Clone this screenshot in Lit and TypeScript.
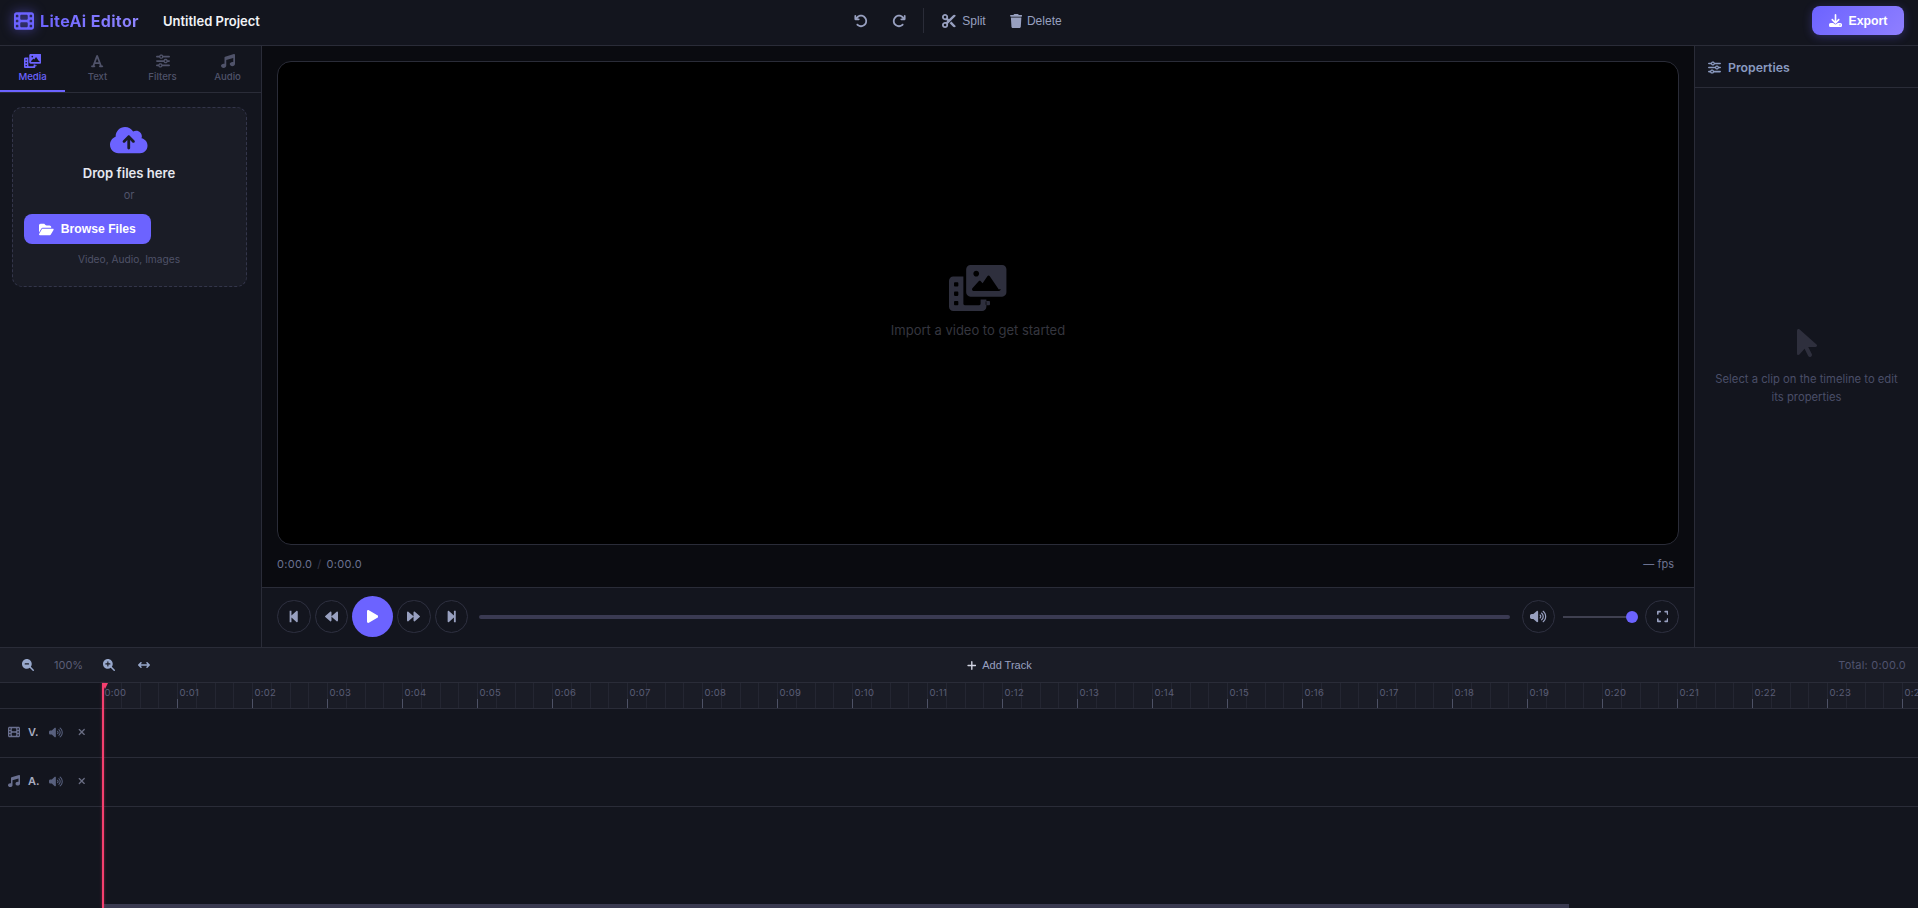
import { LitElement, html, css, svg } from 'lit';
import { customElement } from 'lit/decorators.js';

// font-awesome style glyphs: [viewBox width, path]
const ICONS: Record<string, [number, string]> = {
  film: [512, 'M0 96C0 60.7 28.7 32 64 32H448c35.3 0 64 28.7 64 64V416c0 35.3-28.7 64-64 64H64c-35.3 0-64-28.7-64-64V96zM48 368v32c0 8.8 7.2 16 16 16H96c8.8 0 16-7.2 16-16V368c0-8.8-7.2-16-16-16H64c-8.8 0-16 7.2-16 16zm368-16c-8.8 0-16 7.2-16 16v32c0 8.8 7.2 16 16 16h32c8.8 0 16-7.2 16-16V368c0-8.8-7.2-16-16-16H416zM48 240v32c0 8.8 7.2 16 16 16H96c8.8 0 16-7.2 16-16V240c0-8.8-7.2-16-16-16H64c-8.8 0-16 7.2-16 16zm368-16c-8.8 0-16 7.2-16 16v32c0 8.8 7.2 16 16 16h32c8.8 0 16-7.2 16-16V240c0-8.8-7.2-16-16-16H416zM48 112v32c0 8.8 7.2 16 16 16H96c8.8 0 16-7.2 16-16V112c0-8.8-7.2-16-16-16H64c-8.8 0-16 7.2-16 16zM416 96c-8.8 0-16 7.2-16 16v32c0 8.8 7.2 16 16 16h32c8.8 0 16-7.2 16-16V112c0-8.8-7.2-16-16-16H416zM160 128v64c0 17.7 14.3 32 32 32H320c17.7 0 32-14.3 32-32V128c0-17.7-14.3-32-32-32H192c-17.7 0-32 14.3-32 32zm32 160c-17.7 0-32 14.3-32 32v64c0 17.7 14.3 32 32 32H320c17.7 0 32-14.3 32-32V320c0-17.7-14.3-32-32-32H192z'],
  media: [640, 'M352 432c0 8.836-7.164 16-16 16H176c-8.838 0-16-7.164-16-16L160 128H48C21.49 128 .0003 149.5 .0003 176v288c0 26.51 21.49 48 48 48h320c26.51 0 48-21.49 48-48v-80h-64V432zM104 439c0 4.969-4.031 9-9 9h-30c-4.969 0-9-4.031-9-9v-30c0-4.969 4.031-9 9-9h30c4.969 0 9 4.031 9 9V439zM104 335c0 4.969-4.031 9-9 9h-30c-4.969 0-9-4.031-9-9v-30c0-4.969 4.031-9 9-9h30c4.969 0 9 4.031 9 9V335zM104 231c0 4.969-4.031 9-9 9h-30c-4.969 0-9-4.031-9-9v-30C56 196 60.03 192 65 192h30c4.969 0 9 4.031 9 9V231zM408 409c0-4.969 4.031-9 9-9h30c4.969 0 9 4.031 9 9v30c0 4.969-4.031 9-9 9h-30c-4.969 0-9-4.031-9-9V409zM591.1 0H239.1C213.5 0 191.1 21.49 191.1 48v256c0 26.51 21.49 48 48 48h352c26.51 0 48-21.49 48-48v-256C640 21.49 618.5 0 591.1 0zM303.1 64c17.68 0 32 14.33 32 32s-14.32 32-32 32C286.3 128 271.1 113.7 271.1 96S286.3 64 303.1 64zM574.1 279.6C571.3 286 564.1 288 558.1 288H273.1C266.1 288 260.5 284.3 257.7 278.1C255 271.9 256.1 264.8 260.5 259.6l70-80C333.5 176.1 337.7 175.1 342 175.1c4.311 0 8.463 1.133 11.5 4.525l20.52 23.36l53.07-77.91c3.072-4.51 8.117-7.168 13.5-7.168c5.383 0 10.43 2.658 13.5 7.168l100.1 147.1C576.8 264.8 577.5 272.1 574.1 279.6z'],
  font: [448, 'M254 52.8C249.3 40.3 237.3 32 224 32s-25.3 8.3-30 20.8L57.8 416H32c-17.7 0-32 14.3-32 32s14.3 32 32 32h96c17.7 0 32-14.3 32-32s-14.3-32-32-32h-1.8l18-48H303.8l18 48H320c-17.7 0-32 14.3-32 32s14.3 32 32 32h96c17.7 0 32-14.3 32-32s-14.3-32-32-32H390.2L254 52.8zM279.8 304H168.2L224 155.1 279.8 304z'],
  sliders: [512, 'M0 416c0 17.7 14.3 32 32 32l54.7 0c12.3 28.3 40.5 48 73.3 48s61-19.7 73.3-48L480 448c17.7 0 32-14.3 32-32s-14.3-32-32-32l-246.7 0c-12.3-28.3-40.5-48-73.3-48s-61 19.7-73.3 48L32 384c-17.7 0-32 14.3-32 32zm128 0a32 32 0 1 1 64 0 32 32 0 1 1 -64 0zM320 256a32 32 0 1 1 64 0 32 32 0 1 1 -64 0zm32-80c-32.8 0-61 19.7-73.3 48L32 224c-17.7 0-32 14.3-32 32s14.3 32 32 32l246.7 0c12.3 28.3 40.5 48 73.3 48s61-19.7 73.3-48l54.7 0c17.7 0 32-14.3 32-32s-14.3-32-32-32l-54.7 0c-12.3-28.3-40.5-48-73.3-48zM192 128a32 32 0 1 1 0-64 32 32 0 1 1 0 64zm73.3-64C253 35.7 224.8 16 192 16s-61 19.7-73.3 48L32 64C14.3 64 0 78.3 0 96s14.3 32 32 32l86.7 0c12.3 28.3 40.5 48 73.3 48s61-19.7 73.3-48L480 128c17.7 0 32-14.3 32-32s-14.3-32-32-32L265.3 64z'],
  music: [512, 'M499.1 6.3c8.1 6 12.9 15.6 12.9 25.7v72V368c0 44.2-43 80-96 80s-96-35.8-96-80s43-80 96-80c11.2 0 22 1.6 32 4.6V147L192 223.8V432c0 44.2-43 80-96 80s-96-35.8-96-80s43-80 96-80c11.2 0 22 1.6 32 4.6V200 128c0-14.1 9.3-26.6 22.8-30.7l320-96c9.7-2.9 20.2-1.1 28.3 4.9z'],
  cloud: [640, 'M144 480C64.5 480 0 415.5 0 336c0-62.8 40.2-116.2 96.2-135.9c-.1-2.7-.2-5.4-.2-8.1c0-88.4 71.6-160 160-160c59.3 0 111 32.2 138.7 80.2C409.9 102 428.3 96 448 96c53 0 96 43 96 96c0 12.2-2.3 23.8-6.4 34.6C596 238.4 640 290.1 640 352c0 70.7-57.3 128-128 128H144zm79-217c-9.4 9.4-9.4 24.6 0 33.9s24.6 9.4 33.9 0l39-39V392c0 13.3 10.7 24 24 24s24-10.7 24-24V257.9l39 39c9.4 9.4 24.6 9.4 33.9 0s9.4-24.6 0-33.9l-80-80c-9.4-9.4-24.6-9.4-33.9 0l-80 80z'],
  folder: [576, 'M88.7 223.8L0 375.8V96C0 60.7 28.7 32 64 32H181.5c17 0 33.3 6.7 45.3 18.7l26.5 26.5c12 12 28.3 18.7 45.3 18.7H416c35.3 0 64 28.7 64 64v32H144c-22.8 0-43.8 12.1-55.3 31.8zm27.6 16.1C122.1 230 132.6 224 144 224H544c11.5 0 22 6.1 27.7 16.1s5.7 22.2-.1 32.1l-112 192C453.9 474 443.4 480 432 480H32c-11.5 0-22-6.1-27.7-16.1s-5.7-22.2 .1-32.1l112-192z'],
  undo: [512, 'M125.7 160H176c17.7 0 32 14.3 32 32s-14.3 32-32 32H48c-17.7 0-32-14.3-32-32V64c0-17.7 14.3-32 32-32s32 14.3 32 32v51.2L97.6 97.6c87.5-87.5 229.3-87.5 316.8 0s87.5 229.3 0 316.8s-229.3 87.5-316.8 0c-12.5-12.5-12.5-32.8 0-45.3s32.8-12.5 45.3 0c62.5 62.5 163.8 62.5 226.3 0s62.5-163.8 0-226.3s-163.8-62.5-226.3 0L125.7 160z'],
  scissors: [512, 'M256 192l-39.5-39.5c4.9-12.6 7.5-26.2 7.5-40.5C224 50.1 173.9 0 112 0S0 50.1 0 112s50.1 112 112 112c14.3 0 27.9-2.7 40.5-7.5L192 256l-39.5 39.5c-12.6-4.9-26.2-7.5-40.5-7.5C50.1 288 0 338.1 0 400s50.1 112 112 112s112-50.1 112-112c0-14.3-2.7-27.9-7.5-40.5L499.2 76.8c7.1-7.1 7.1-18.5 0-25.6c-28.3-28.3-74.1-28.3-102.4 0L256 192zm22.6 150.6L396.8 460.8c28.3 28.3 74.1 28.3 102.4 0c7.1-7.1 7.1-18.5 0-25.6L342.6 278.6l-64 64zM64 112a48 48 0 1 1 96 0 48 48 0 1 1 -96 0zm48 240a48 48 0 1 1 0 96 48 48 0 1 1 0-96z'],
  trash: [448, 'M135.2 17.7L128 32H32C14.3 32 0 46.3 0 64S14.3 96 32 96H416c17.7 0 32-14.3 32-32s-14.3-32-32-32H320l-7.2-14.3C307.4 6.8 296.3 0 284.2 0H163.8c-12.1 0-23.2 6.8-28.6 17.7zM416 128H32L53.2 467c1.6 25.3 22.6 45 47.9 45H346.9c25.3 0 46.3-19.7 47.9-45L416 128z'],
  download: [512, 'M288 32c0-17.7-14.3-32-32-32s-32 14.3-32 32V274.7l-73.4-73.4c-12.5-12.5-32.8-12.5-45.3 0s-12.5 32.8 0 45.3l128 128c12.5 12.5 32.8 12.5 45.3 0l128-128c12.5-12.5 12.5-32.8 0-45.3s-32.8-12.5-45.3 0L288 274.7V32zM64 352c-35.3 0-64 28.7-64 64v32c0 35.3 28.7 64 64 64H448c35.3 0 64-28.7 64-64V416c0-35.3-28.7-64-64-64H346.5l-45.3 45.3c-25 25-65.5 25-90.5 0L165.5 352H64zm368 56a24 24 0 1 1 0 48 24 24 0 1 1 0-48z'],
  pointer: [320, 'M0 55.2V426c0 12.2 9.9 22 22 22c6.3 0 12.4-2.7 16.6-7.5L121.2 346l58.1 116.3c7.9 15.8 27.1 22.2 42.9 14.3s22.2-27.1 14.3-42.9L179.8 320H297.9c12.2 0 22.1-9.9 22.1-22.1c0-6.3-2.7-12.3-7.4-16.5L38.6 37.9C34.3 34.1 28.9 32 23.2 32C10.4 32 0 42.4 0 55.2z'],
  start: [448, 'M64 468V44c0-6.6 5.4-12 12-12h48c6.6 0 12 5.4 12 12v176.4l195.5-181C352.1 22.3 384 36.6 384 64v384c0 27.4-31.9 41.7-52.5 24.6L136 292.7V468c0 6.6-5.4 12-12 12H76c-6.6 0-12-5.4-12-12z'],
  end: [448, 'M384 44v424c0 6.6-5.4 12-12 12h-48c-6.6 0-12-5.4-12-12V291.6l-195.5 181C95.9 489.7 64 475.4 64 448V64c0-27.4 31.9-41.7 52.5-24.6L312 219.3V44c0-6.6 5.4-12 12-12h48c6.6 0 12 5.4 12 12z'],
  backward: [512, 'M11.5 280.6l192 160c20.6 17.2 52.5 2.8 52.5-24.6V96c0-27.4-31.9-41.8-52.5-24.6l-192 160c-15.3 12.8-15.3 36.4 0 49.2zm256 0l192 160c20.6 17.2 52.5 2.8 52.5-24.6V96c0-27.4-31.9-41.8-52.5-24.6l-192 160c-15.3 12.8-15.3 36.4 0 49.2z'],
  forward: [512, 'M500.5 231.4l-192-160C287.9 54.3 256 68.6 256 96v320c0 27.4 31.9 41.8 52.5 24.6l192-160c15.3-12.8 15.3-36.4 0-49.2zm-256 0l-192-160C31.9 54.3 0 68.6 0 96v320c0 27.4 31.9 41.8 52.5 24.6l192-160c15.3-12.8 15.3-36.4 0-49.2z'],
  play: [448, 'M424.4 214.7L72.4 6.6C43.8-10.3 0 6.1 0 47.9V464c0 37.5 40.7 60.1 72.4 41.3l352-208c31.4-18.5 31.5-64.1 0-82.6z'],
  volume: [640, 'M533.6 32.5C598.5 85.2 640 165.8 640 256s-41.5 170.7-106.4 223.5c-10.3 8.4-25.4 6.8-33.8-3.5s-6.8-25.4 3.5-33.8C557.5 398.2 592 331.2 592 256s-34.5-142.2-88.7-186.3c-10.3-8.4-11.8-23.5-3.5-33.8s23.5-11.8 33.8-3.5zM473.1 107c43.2 35.2 70.9 88.9 70.9 149s-27.7 113.8-70.9 149c-10.3 8.4-25.4 6.8-33.8-3.5s-6.8-25.4 3.5-33.8C475.3 341.3 496 301.1 496 256s-20.7-85.3-53.2-111.8c-10.3-8.4-11.8-23.5-3.5-33.8s23.5-11.8 33.8-3.5zm-60.5 74.5C434.1 199.1 448 225.9 448 256s-13.9 56.9-35.4 74.5c-10.3 8.4-25.4 6.8-33.8-3.5s-6.8-25.4 3.5-33.8C393.1 284.4 400 271 400 256s-6.9-28.4-17.7-37.3c-10.3-8.4-11.8-23.5-3.5-33.8s23.5-11.8 33.8-3.5zM301.1 34.8C312.6 40 320 51.4 320 64V448c0 12.6-7.4 24-18.9 29.2s-25 3.1-34.4-5.3L131.8 352H64c-35.3 0-64-28.7-64-64V224c0-35.3 28.7-64 64-64h67.8L266.7 40.1c9.4-8.4 22.9-10.4 34.4-5.3z'],
  expand: [448, 'M32 32C14.3 32 0 46.3 0 64v96c0 17.7 14.3 32 32 32s32-14.3 32-32V96h64c17.7 0 32-14.3 32-32s-14.3-32-32-32H32zM64 352c0-17.7-14.3-32-32-32s-32 14.3-32 32v96c0 17.7 14.3 32 32 32h96c17.7 0 32-14.3 32-32s-14.3-32-32-32H64V352zM320 32c-17.7 0-32 14.3-32 32s14.3 32 32 32h64v64c0 17.7 14.3 32 32 32s32-14.3 32-32V64c0-17.7-14.3-32-32-32H320zM448 352c0-17.7-14.3-32-32-32s-32 14.3-32 32v64H320c-17.7 0-32 14.3-32 32s14.3 32 32 32h96c17.7 0 32-14.3 32-32V352z'],
  zoomout: [512, 'M416 208c0 45.9-14.9 88.3-40 122.7L502.6 457.4c12.5 12.5 12.5 32.8 0 45.3s-32.8 12.5-45.3 0L330.7 376c-34.4 25.2-76.8 40-122.7 40C93.1 416 0 322.9 0 208S93.1 0 208 0S416 93.1 416 208zM136 184c-13.3 0-24 10.7-24 24s10.7 24 24 24H280c13.3 0 24-10.7 24-24s-10.7-24-24-24H136z'],
  zoomin: [512, 'M416 208c0 45.9-14.9 88.3-40 122.7L502.6 457.4c12.5 12.5 12.5 32.8 0 45.3s-32.8 12.5-45.3 0L330.7 376c-34.4 25.2-76.8 40-122.7 40C93.1 416 0 322.9 0 208S93.1 0 208 0S416 93.1 416 208zM184 296c0 13.3 10.7 24 24 24s24-10.7 24-24V232h64c13.3 0 24-10.7 24-24s-10.7-24-24-24H232V120c0-13.3-10.7-24-24-24s-24 10.7-24 24v64H120c-13.3 0-24 10.7-24 24s10.7 24 24 24h64v64z'],
  fit: [512, 'M406.6 374.6l96-96c12.5-12.5 12.5-32.8 0-45.3l-96-96c-12.5-12.5-32.8-12.5-45.3 0s-12.5 32.8 0 45.3L402.7 224l-293.5 0 41.4-41.4c12.5-12.5 12.5-32.8 0-45.3s-32.8-12.5-45.3 0l-96 96c-12.5 12.5-12.5 32.8 0 45.3l96 96c12.5 12.5 32.8 12.5 45.3 0s12.5-32.8 0-45.3L109.3 288l293.5 0-41.4 41.4c-12.5 12.5-12.5 32.8 0 45.3s32.8 12.5 45.3 0z'],
  plus: [448, 'M256 80c0-17.7-14.3-32-32-32s-32 14.3-32 32V224H48c-17.7 0-32 14.3-32 32s14.3 32 32 32H192V432c0 17.7 14.3 32 32 32s32-14.3 32-32V288H400c17.7 0 32-14.3 32-32s-14.3-32-32-32H256V80z'],
  xmark: [384, 'M342.6 150.6c12.5-12.5 12.5-32.8 0-45.3s-32.8-12.5-45.3 0L192 210.7 86.6 105.4c-12.5-12.5-32.8-12.5-45.3 0s-12.5 32.8 0 45.3L146.7 256 41.4 361.4c-12.5 12.5-12.5 32.8 0 45.3s32.8 12.5 45.3 0L192 301.3 297.4 406.6c12.5 12.5 32.8 12.5 45.3 0s12.5-32.8 0-45.3L237.3 256 342.6 150.6z'],
};

const icon = (name: string, cls = '') => {
  const [w, d] = ICONS[name];
  return html`<svg class="ic ${cls}" viewBox="0 0 ${w} 512" fill="currentColor" aria-hidden="true">${svg`<path d="${d}"></path>`}</svg>`;
};

@customElement('app-root')
export class AppRoot extends LitElement {
  static styles = css`
    :host {
      display: flex;
      flex-direction: column;
      width: 1918px;
      height: 908px;
      overflow: hidden;
      background: #13151e;
      color: #e6e8f0;
      font-family: Inter, 'Noto Sans', sans-serif;
    }
    button {
      font-family: 'Liberation Sans', Arial, sans-serif;
      border: none;
      background: none;
      padding: 0;
      color: inherit;
      display: flex;
      align-items: center;
      justify-content: center;
    }
    .ic { display: block; height: 14px; width: auto; flex: none; }
    .flip { transform: scaleX(-1); }

    /* top bar */
    .topbar {
      height: 41px;
      flex: none;
      box-sizing: content-box;
      display: grid;
      grid-template-columns: 1fr auto 1fr;
      align-items: center;
      padding: 0 14px 4px;
      background: #13151e;
      border-bottom: 1px solid #2a2c38;
    }
    .brand { display: flex; align-items: center; }
    .logo-ic { height: 20px; color: #6c63ff; filter: drop-shadow(0 0 6px rgba(108, 99, 255, 0.7)); }
    .logo-text {
      margin-left: 6px;
      font-size: 16px;
      font-weight: 700;
      letter-spacing: 0.35px;
      background: linear-gradient(90deg, #6c63ff, #8f85ff);
      -webkit-background-clip: text;
      background-clip: text;
      color: transparent;
    }
    .project { margin-left: 24px; font-size: 13px; font-weight: 600; color: #f1f2f6; }
    .tools { display: flex; align-items: center; color: #8f9ac0; font-size: 12px; margin-right: 14px; }
    .tool-ic { width: 38px; height: 30px; color: #98a0c0; }
    .sep { width: 1px; height: 25px; background: #2a2c38; margin: 0 18px 0 5px; }
    .tool { gap: 6px; color: #98a0c0; font-size: 12px; }
    .tool.del { margin-left: 24px; gap: 5px; }
    .export-wrap { display: flex; justify-content: flex-end; }
    .export {
      width: 92px;
      height: 29px;
      gap: 7px;
      border-radius: 8px;
      background: linear-gradient(135deg, #6c63ff, #8f7fff);
      box-shadow: 0 2px 10px rgba(108, 99, 255, 0.3);
      color: #fff;
      font-size: 12.3px;
      font-weight: 700;
    }
    .export .ic { height: 13px; }

    /* main row */
    .main { height: 601px; flex: none; display: flex; border-bottom: 1px solid #2a2c38; box-sizing: content-box; }
    .left { width: 261px; flex: none; border-right: 1px solid #2a2c38; display: flex; flex-direction: column; }
    .tabs { height: 46px; flex: none; display: flex; padding-right: 1px; border-bottom: 1px solid #2a2c38; }
    .tab {
      flex: 1;
      display: flex;
      flex-direction: column;
      align-items: center;
      padding-top: 8px;
      gap: 3px;
      color: #50536a;
      font-size: 9.6px;
      font-weight: 500;
      line-height: 12px;
    }
    .tab.on { color: #6c63ff; box-shadow: inset 0 -2px 0 #6c63ff; }
    .drop {
      margin: 14px 14px 0 12px;
      height: 180px;
      box-sizing: border-box;
      display: flex;
      flex-direction: column;
      align-items: center;
      padding: 17px 12px 0 11px;
      border: 1px dashed #33354a;
      border-radius: 10px;
      background: #1a1c26;
    }
    .cloud { height: 30px; color: #6c63ff; }
    .drop-title { margin-top: 9px; font-size: 13.1px; font-weight: 600; line-height: 18px; color: #e6e8f0; }
    .drop-or { margin-top: 6px; font-size: 11px; line-height: 14px; color: #50536a; }
    .browse {
      align-self: flex-start;
      margin-top: 12px;
      width: 127px;
      height: 30px;
      gap: 7px;
      border-radius: 8px;
      background: #6c63ff;
      color: #fff;
      font-size: 12.2px;
      font-weight: 700;
    }
    .browse .ic { height: 13px; }
    .drop-hint { margin-top: 8px; font-size: 10.2px; line-height: 14px; color: #4f5268; }

    .center { flex: 1; min-width: 0; display: flex; flex-direction: column; }
    .stage { height: 541px; flex: none; box-sizing: border-box; background: #0a0b10; padding: 15px 15px 0; display: flex; flex-direction: column; }
    .canvas {
      height: 484px;
      flex: none;
      box-sizing: border-box;
      border: 1px solid #2a2c38;
      border-radius: 14px;
      background: #000;
      display: flex;
      flex-direction: column;
      align-items: center;
      justify-content: center;
      padding-bottom: 4px;
    }
    .canvas .ic { height: 46px; color: #2e2f3d; }
    .canvas-text { margin-top: 11px; font-size: 13px; line-height: 16px; color: #35363f; }
    .timebar { flex: 1; display: flex; align-items: center; justify-content: space-between; padding: 0 5px 5px 0; font-size: 11px; color: #6b7290; }
    .times { display: flex; gap: 5px; letter-spacing: 0.3px; }
    .slash { color: #33354a; }

    .controls {
      height: 59px;
      flex: none;
      box-sizing: border-box;
      display: flex;
      align-items: center;
      padding: 0 15px 1px;
      border-top: 1px solid #2a2c38;
      background: #13151e;
    }
    .round {
      width: 33.6px;
      height: 33.6px;
      flex: none;
      box-sizing: border-box;
      border: 1px solid #2e3040;
      border-radius: 50%;
      color: #98a0c0;
      margin-right: 4px;
    }
    .round .ic { height: 13px; }
    .play {
      width: 41px;
      height: 41px;
      flex: none;
      border-radius: 50%;
      background: #6c63ff;
      color: #fff;
      margin-right: 4px;
    }
    .play .ic { height: 13px; }
    .seek { flex: 1; height: 4px; border-radius: 2px; background: #3a3a52; margin: 0 12px 0 10.6px; }
    .vol { width: 75px; flex: none; display: flex; align-items: center; margin: 0 7px 0 8px; }
    .vol-track { flex: 1; height: 2px; background: #3f4050; }
    .vol-thumb { width: 12px; height: 12px; border-radius: 50%; background: #6c63ff; }
    .last { margin-right: 0; }

    .right { width: 223px; flex: none; border-left: 1px solid #2a2c38; display: flex; flex-direction: column; }
    .prop-head {
      height: 39px;
      flex: none;
      box-sizing: content-box;
      display: flex;
      align-items: center;
      gap: 7px;
      padding-left: 13px;
      padding-top: 2px;
      border-bottom: 1px solid #2a2c38;
      font-size: 12.3px;
      font-weight: 600;
      color: #8a9ac0;
    }
    .prop-head .ic { height: 13px; }
    .prop-empty { display: flex; flex-direction: column; align-items: center; padding: 239px 16px 0; }
    .prop-empty .ic { height: 32px; color: #2e2f3d; }
    .prop-text { margin-top: 11px; font-size: 11.25px; line-height: 18px; text-align: center; color: #4a4e68; }

    /* timeline */
    .timeline { flex: 1; min-height: 0; display: flex; flex-direction: column; position: relative; overflow: hidden; }
    .tl-head {
      height: 34px;
      flex: none;
      display: flex;
      justify-content: space-between;
      align-items: center;
      padding: 0 12px 0 22px;
      background: #1a1c26;
      border-bottom: 1px solid #2a2c38;
    }
    .zoom { display: flex; align-items: center; color: #98a8cc; }
    .zoom .ic { height: 12px; }
    .zoom-val { width: 30px; margin: 0 19px 0 20px; font-size: 11px; color: #5a5e76; }
    .fit { margin-left: 23px; }
    .add { gap: 6px; font-size: 11px; color: #98a0c0; margin-left: 10px; }
    .add .ic { height: 11px; color: #d4d6e4; }
    .total { text-align: right; font-size: 11px; color: #50536e; letter-spacing: 0.2px; }

    .ruler-row { height: 26px; flex: none; display: flex; border-bottom: 1px solid #2a2c38; box-sizing: border-box; }
    .corner { width: 102px; flex: none; }
    .ruler { flex: 1; min-width: 0; display: flex; overflow: hidden; background: #1a1c26; }
    .sec { width: 75px; flex: none; display: flex; position: relative; }
    .sec-label { position: absolute; left: 2.5px; top: 4px; font-size: 9.5px; line-height: 11px; letter-spacing: 0.3px; color: #5a5e76; }
    .sub { flex: 1; border-left: 1px solid #242632; }
    .major { width: 1px; height: 9px; margin-right: -1px; align-self: flex-end; background: #4e5266; position: relative; }

    .track { height: 48px; flex: none; display: flex; align-items: center; border-bottom: 1px solid #2a2c38; box-sizing: content-box; }
    .track-label { width: 102px; flex: none; display: flex; align-items: center; padding-left: 8px; margin-bottom: 2px; box-sizing: border-box; color: #6a7090; }
    .track-label .ic { height: 12px; }
    .track-name { width: 21px; margin-left: 8px; font-size: 11px; font-weight: 600; color: #a8acc0; }
    .track-vol { width: 14px; color: #58607e; }
    .track-vol .ic { height: 11px; }
    .track-x { margin-left: 15px; width: 8px; color: #6a6e84; }
    .track-x .ic { height: 10px; }
    .spacer { flex: 1; }
    .scrollbar { height: 4px; flex: none; width: 1466px; margin-left: 103px; background: #3a3a50; }
    .playhead {
      position: absolute;
      left: 102px;
      top: 35px;
      bottom: 0;
      width: 2px;
      background: #f43f6e;
      box-shadow: 0 0 3px rgba(244, 63, 110, 0.5);
    }
    .playhead::before {
      content: '';
      position: absolute;
      left: 0;
      top: 0;
      border-style: solid;
      border-width: 6px 3px 0;
      border-color: #f43f6e transparent transparent;
    }
  `;

  private tab(name: string, label: string, on = false) {
    return html`<div class="tab ${on ? 'on' : ''}">${icon(name)}<span>${label}</span></div>`;
  }

  private round(name: string, cls = '') {
    return html`<button class="round ${cls}">${icon(name)}</button>`;
  }

  private track(name: string, label: string) {
    return html`
      <div class="track">
        <div class="track-label">
          ${icon(name)}
          <span class="track-name">${label}</span>
          <span class="track-vol">${icon('volume')}</span>
          <span class="track-x">${icon('xmark')}</span>
        </div>
      </div>
    `;
  }

  render() {
    const secs = Array.from({ length: 25 }, (_, i) => `0:${String(i).padStart(2, '0')}`);
    return html`
      <header class="topbar">
        <div class="brand">
          ${icon('film', 'logo-ic')}
          <span class="logo-text">LiteAi Editor</span>
          <span class="project">Untitled Project</span>
        </div>
        <div class="tools">
          <button class="tool-ic">${icon('undo')}</button>
          <button class="tool-ic">${icon('undo', 'flip')}</button>
          <div class="sep"></div>
          <button class="tool">${icon('scissors')}Split</button>
          <button class="tool del">${icon('trash')}Delete</button>
        </div>
        <div class="export-wrap">
          <button class="export">${icon('download')}Export</button>
        </div>
      </header>

      <div class="main">
        <aside class="left">
          <div class="tabs">
            ${this.tab('media', 'Media', true)}
            ${this.tab('font', 'Text')}
            ${this.tab('sliders', 'Filters')}
            ${this.tab('music', 'Audio')}
          </div>
          <div class="drop">
            ${icon('cloud', 'cloud')}
            <div class="drop-title">Drop files here</div>
            <div class="drop-or">or</div>
            <button class="browse">${icon('folder')}Browse Files</button>
            <div class="drop-hint">Video, Audio, Images</div>
          </div>
        </aside>

        <section class="center">
          <div class="stage">
            <div class="canvas">
              ${icon('media')}
              <div class="canvas-text">Import a video to get started</div>
            </div>
            <div class="timebar">
              <div class="times"><span>0:00.0</span><span class="slash">/</span><span>0:00.0</span></div>
              <div>— fps</div>
            </div>
          </div>
          <div class="controls">
            ${this.round('start')}
            ${this.round('backward')}
            <button class="play">${icon('play')}</button>
            ${this.round('forward')}
            ${this.round('end', 'last')}
            <div class="seek"></div>
            ${this.round('volume', 'last')}
            <div class="vol"><div class="vol-track"></div><div class="vol-thumb"></div></div>
            ${this.round('expand', 'last')}
          </div>
        </section>

        <aside class="right">
          <div class="prop-head">${icon('sliders')}<span>Properties</span></div>
          <div class="prop-empty">
            ${icon('pointer')}
            <div class="prop-text">Select a clip on the timeline to edit<br />its properties</div>
          </div>
        </aside>
      </div>

      <section class="timeline">
        <div class="tl-head">
          <div class="zoom">
            ${icon('zoomout')}
            <span class="zoom-val">100%</span>
            ${icon('zoomin')}
            <span class="fit">${icon('fit')}</span>
          </div>
          <button class="add">${icon('plus')}Add Track</button>
          <div class="total">Total: 0:00.0</div>
        </div>
        <div class="ruler-row">
          <div class="corner"></div>
          <div class="ruler">
            ${secs.map(
              (s) => html`
                <div class="sec">
                  <span class="sec-label">${s}</span>
                  <div class="major"></div>
                  <div class="sub"></div><div class="sub"></div><div class="sub"></div><div class="sub"></div>
                </div>
              `
            )}
          </div>
        </div>
        ${this.track('film', 'V.')}
        ${this.track('music', 'A.')}
        <div class="spacer"></div>
        <div class="scrollbar"></div>
        <div class="playhead"></div>
      </section>
    `;
  }
}
